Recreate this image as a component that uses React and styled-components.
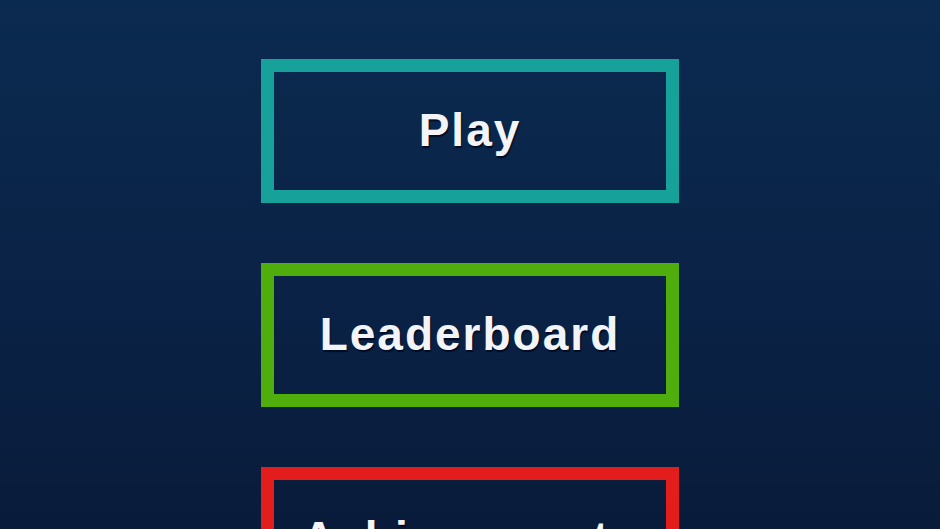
import React from 'react'
import styled, { createGlobalStyle } from 'styled-components'

const GlobalStyle = createGlobalStyle`
  html, body {
    margin: 0;
    padding: 0;
    height: 100%;
  }
  body {
    background: linear-gradient(180deg, #0b2a50 0%, #0a2347 50%, #091b3a 100%);
    font-family: 'Liberation Sans', Arial, sans-serif;
    overflow: hidden;
  }
`

const Menu = styled.div`
  display: flex;
  flex-direction: column;
  align-items: center;
  gap: 60px;
  padding-top: 59px;
  height: 529px;
  box-sizing: border-box;
  overflow: hidden;
`

const MenuButton = styled.button`
  width: 418px;
  height: 144px;
  flex-shrink: 0;
  box-sizing: border-box;
  border: 13px solid ${p => p.color};
  background: transparent;
  color: #f2f4f8;
  font-family: 'Liberation Sans', Arial, sans-serif;
  font-weight: 700;
  font-size: 46px;
  letter-spacing: 2px;
  text-shadow: 1px 2px 1px rgba(0, 8, 30, 0.85);
  display: flex;
  align-items: center;
  justify-content: center;
  padding: 0 0 2px;
  cursor: pointer;
`

const items = [
  { label: 'Play', color: '#17a19b' },
  { label: 'Leaderboard', color: '#4fae0c' },
  { label: 'Achievements', color: '#e21d1b' },
]

export default function App() {
  return (
    <>
      <GlobalStyle />
      <Menu>
        {items.map(item => (
          <MenuButton key={item.label} color={item.color}>
            {item.label}
          </MenuButton>
        ))}
      </Menu>
    </>
  )
}
